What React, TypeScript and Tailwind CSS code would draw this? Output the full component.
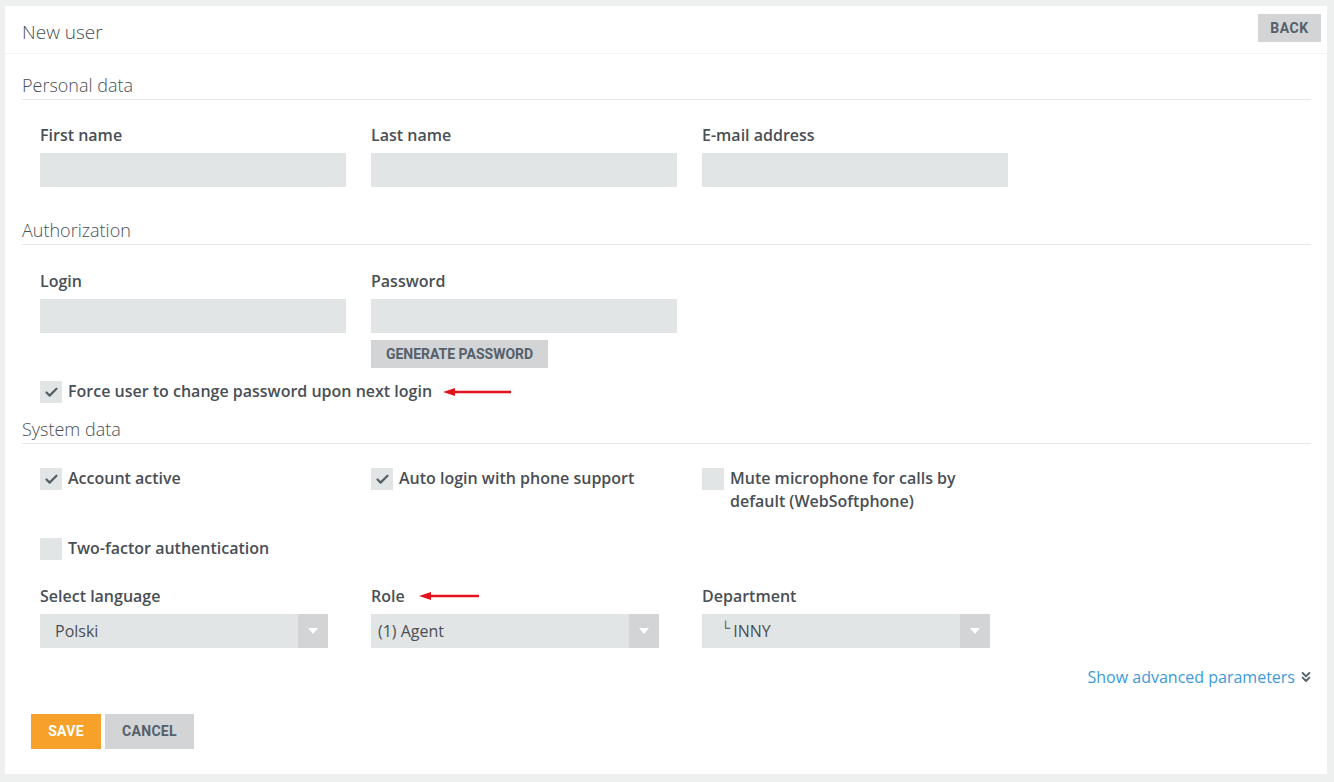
import { Check, ChevronsDown } from 'lucide-react';
import type { ReactNode } from 'react';

const font = { fontFamily: '"Open Sans", "Noto Sans", sans-serif' };
const btnFont = { fontFamily: 'Roboto, "Liberation Sans", sans-serif' };

function RedArrow({ w }: { w: number }) {
  return (
    <svg width={w} height="10" viewBox={`0 0 ${w} 10`} className="shrink-0">
      <line x1="8" y1="5" x2={w} y2="5" stroke="#e3131b" strokeWidth="2.5" />
      <polygon points="0,5 12,1 12,9" fill="#e3131b" />
    </svg>
  );
}

function Section({ title, children }: { title: string; children: ReactNode }) {
  return (
    <div>
      <h2 className="text-[18px] font-light leading-6 text-[#4a4f55] pb-[2px] border-b border-[#e6e8e8]">{title}</h2>
      <div className="pl-[18px]">{children}</div>
    </div>
  );
}

function Field({ label }: { label: string }) {
  return (
    <div className="w-[306px]">
      <div className="text-[16px] font-semibold leading-[22px] text-[#4a4f55]">{label}</div>
      <div className="mt-[7px] h-[34px] bg-[#e2e5e6]" />
    </div>
  );
}

function CheckBox({ checked, label }: { checked?: boolean; label: ReactNode }) {
  return (
    <div className="flex items-start gap-[6px]">
      <div className="w-[22px] h-[22px] bg-[#e2e5e6] flex items-center justify-center shrink-0 mt-[1px]">
        {checked && <Check size={15} strokeWidth={3.5} className="text-[#555d65]" />}
      </div>
      <div className="text-[16px] font-semibold leading-[23px] text-[#4a4f55]">{label}</div>
    </div>
  );
}

function Select({ label, value, extra, pad }: { label: string; value: ReactNode; extra?: ReactNode; pad: string }) {
  return (
    <div className="w-[288px]">
      <div className="flex items-center gap-[14px] text-[16px] font-semibold leading-[22px] text-[#4a4f55]">
        {label}
        {extra}
      </div>
      <div className="mt-[7px] h-[34px] bg-[#e2e5e6] flex">
        <div className={`flex-1 flex items-center text-[16px] text-[#4a4f55] ${pad}`}>{value}</div>
        <div className="w-[30px] bg-[#d2d4d6] flex items-center justify-center">
          <svg width="10" height="6" viewBox="0 0 10 6">
            <polygon points="0,0 10,0 5,6" fill="#ffffff" />
          </svg>
        </div>
      </div>
    </div>
  );
}

export default function App() {
  return (
    <div className="w-[1334px] h-[782px] bg-[#eef0ef] pl-[5px] pt-[6px] pr-[7px] pb-[8px]" style={font}>
      <div className="bg-white h-full flex flex-col">
        <div className="h-[48px] flex items-start justify-between border-b border-[#f2f3f3] pl-[17px] pr-[6px]">
          <h1 className="text-[19px] font-light text-[#4a4f55] mt-[13px] leading-[26px]">New user</h1>
          <button
            className="mt-[8px] w-[63px] h-[28px] bg-[#d2d4d6] text-[14px] font-bold tracking-[0.5px] text-[#55606b]"
            style={btnFont}
          >
            BACK
          </button>
        </div>

        <div className="pl-[17px] pr-[16px] pt-[19px]">
          <Section title="Personal data">
            <div className="flex gap-[25px] pt-[24px]">
              <Field label="First name" />
              <Field label="Last name" />
              <Field label="E-mail address" />
            </div>
          </Section>

          <div className="mt-[31px]">
            <Section title="Authorization">
              <div className="flex gap-[25px] pt-[25px]">
                <Field label="Login" />
                <div>
                  <Field label="Password" />
                  <button
                    className="mt-[7px] h-[28px] w-[177px] bg-[#d2d4d6] text-[14px] font-bold text-[#55606b]"
                    style={btnFont}
                  >
                    GENERATE PASSWORD
                  </button>
                </div>
              </div>
              <div className="mt-[12px] flex items-center">
                <CheckBox checked label="Force user to change password upon next login" />
                <div className="ml-[11px]">
                  <RedArrow w={68} />
                </div>
              </div>
            </Section>
          </div>

          <div className="mt-[14px]">
            <Section title="System data">
              <div className="grid grid-cols-[306px_306px_306px] gap-x-[25px] pt-[23px]">
                <CheckBox checked label="Account active" />
                <CheckBox checked label="Auto login with phone support" />
                <CheckBox label="Mute microphone for calls by default (WebSoftphone)" />
              </div>
              <div className="mt-[24px]">
                <CheckBox label="Two-factor authentication" />
              </div>
              <div className="flex gap-[43px] mt-[25px]">
                <Select label="Select language" value="Polski" pad="pl-[15px]" />
                <Select label="Role" value="(1) Agent" pad="pl-[7px]" extra={<RedArrow w={60} />} />
                <Select
                  label="Department"
                  pad="pl-[19px]"
                  value={
                    <span>
                      <span className="text-[13px] relative -top-[5px] mr-[3px]">└</span>INNY
                    </span>
                  }
                />
              </div>
            </Section>
            <div className="flex justify-end mt-[18px]">
              <a className="flex items-center gap-[3px] text-[16px] text-[#3d9ad9] leading-[22px]">
                Show advanced parameters
                <ChevronsDown size={16} strokeWidth={3} className="text-[#5b6670] -mr-[3px]" />
              </a>
            </div>
          </div>
        </div>

        <div className="flex gap-[4px] pl-[26px] mt-[26px]">
          <button className="w-[70px] h-[35px] bg-[#f7a12a] text-white text-[14px] font-bold tracking-[0.3px]" style={btnFont}>
            SAVE
          </button>
          <button className="w-[89px] h-[35px] bg-[#d2d4d6] text-[#55606b] text-[14px] font-bold tracking-[0.3px]" style={btnFont}>
            CANCEL
          </button>
        </div>
      </div>
    </div>
  );
}
